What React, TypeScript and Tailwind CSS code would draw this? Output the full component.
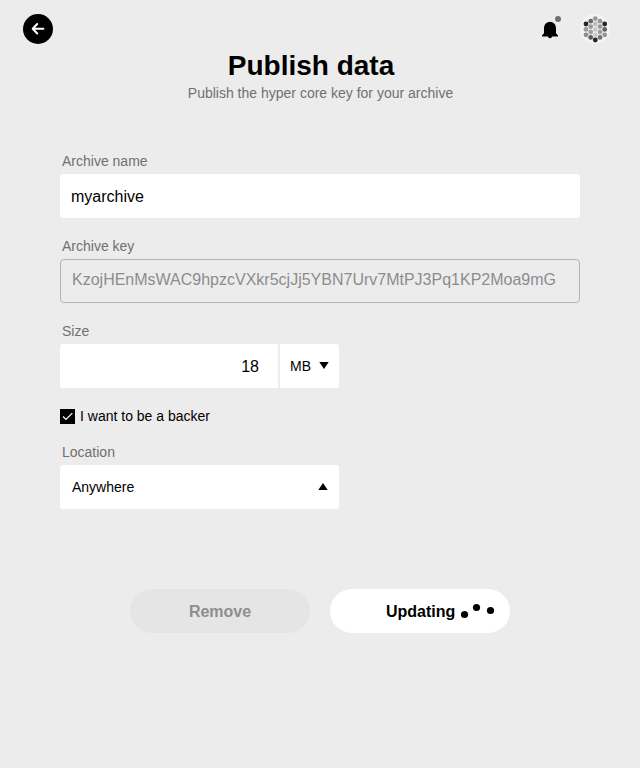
import React from 'react';

type Dot = [x: number, y: number, fill: string];

const avatarDots: Dot[] = [
  [6, 10, '#252525'], [6, 15.4, '#9a9a9a'], [6, 20.8, '#8c8c8c'],
  [10.7, 7.2, '#686868'], [10.7, 12.6, '#999999'], [10.7, 18, '#a0a0a0'], [10.7, 23.4, '#5c5c5c'],
  [15.3, 4.6, '#989898'], [15.3, 10, '#bdbdbd'], [15.3, 15.4, '#c9c9c9'], [15.3, 20.8, '#c9c9c9'], [15.3, 26, '#252525'],
  [20, 7.2, '#999999'], [20, 12.6, '#999999'], [20, 18, '#a0a0a0'], [20, 23.4, '#747474'],
  [24.7, 10, '#252525'], [24.7, 15.4, '#626262'], [24.7, 20.8, '#949494'],
];

function Avatar() {
  return (
    <svg className="size-[30px]" viewBox="0 0 30 30">
      <circle cx="15" cy="15" r="15" fill="#f4f4f4" />
      {avatarDots.map(([x, y, fill]) => (
        <circle key={`${x}-${y}`} cx={x} cy={y} r="2.4" fill={fill} />
      ))}
    </svg>
  );
}

function Bell() {
  return (
    <svg className="h-6 w-5 overflow-visible" viewBox="0 0 20 24">
      <path d="M2 19.6V18.6L4 16.2V10.8a6 6 0 0 1 12 0v5.4l2 2.4v1H12a2 1.6 0 0 1-4 0z" fill="#000" />
      <circle cx="18" cy="2" r="3" fill="#707070" />
    </svg>
  );
}

function Label({ children }: { children: React.ReactNode }) {
  return <div className="pl-0.5 text-sm leading-5 text-[#707070]">{children}</div>;
}

export default function App() {
  return (
    <div className="h-[768px] w-[640px] bg-[#ececec] font-['Liberation_Sans',Arial,sans-serif] text-black">
      <header className="flex h-11 items-end justify-between pr-[30px] pl-[23px]">
        <button className="size-[30px] rounded-full bg-black">
          <svg className="size-[30px]" viewBox="0 0 30 30" fill="none" stroke="#fff" strokeWidth="2">
            <path d="M20.4 14.8H10M14.2 10L9.7 14.8L14.2 19.5" strokeLinecap="round" strokeLinejoin="round" />
          </svg>
        </button>
        <div className="flex items-center gap-5">
          <Bell />
          <Avatar />
        </div>
      </header>
      <div className="pt-1.5 text-center">
        <h1 className="pr-[18px] text-[28px] leading-8 font-bold">Publish data</h1>
        <p className="pt-px pl-px text-sm leading-5 text-[#707070]">Publish the hyper core key for your archive</p>
      </div>
      <form className="flex flex-col px-[60px] pt-12">
        <Label>Archive name</Label>
        <div className="mt-[3px] flex h-11 items-center rounded-[3px] bg-white pt-0.5 pl-[11px] text-base">myarchive</div>
        <div className="mt-[18px]"><Label>Archive key</Label></div>
        <div className="mt-[3px] h-11 rounded-[4px] border border-[#b5b5b5] pt-2 pl-[11px] text-base leading-6 text-[#8c8c8c]">
          KzojHEnMsWAC9hpzcVXkr5cjJj5YBN7Urv7MtPJ3Pq1KP2Moa9mG
        </div>
        <div className="mt-[18px]"><Label>Size</Label></div>
        <div className="mt-[3px] flex h-11 w-[279px] gap-0.5">
          <div className="flex w-[218px] items-center justify-end rounded-l-[3px] bg-white pt-0.5 pr-[19px] text-base">18</div>
          <div className="flex flex-1 items-center rounded-r-[3px] bg-white pl-2.5 text-sm">
            MB
            <svg className="mb-px ml-2 h-[7px] w-2.5" viewBox="0 0 10 7"><path d="M0.3 0h9.4L5 7z" /></svg>
          </div>
        </div>
        <div className="mt-[18px] flex h-5 items-center gap-[5px] text-sm">
          <span className="mt-px size-[15px] bg-black">
            <svg className="size-[15px]" viewBox="0 0 15 15" fill="none" stroke="#fff" strokeWidth="1.2">
              <path d="M3 7.5L6 10.5L12.3 4.2" />
            </svg>
          </span>
          I want to be a backer
        </div>
        <div className="mt-4"><Label>Location</Label></div>
        <div className="mt-[3px] flex h-11 w-[279px] items-center justify-between rounded-[3px] bg-white pr-[11px] pl-3 text-sm">
          Anywhere
          <svg className="mb-0.5 h-[7px] w-2.5" viewBox="0 0 10 7"><path d="M0.3 7h9.4L5 0z" /></svg>
        </div>
        <div className="mt-20 flex justify-center gap-5 text-base font-bold">
          <div className="flex h-11 w-[180px] items-center justify-center rounded-full bg-[#e5e5e5] pt-0.5 text-[#8e8e8e]">Remove</div>
          <div className="flex h-11 w-[180px] items-center rounded-full bg-white pl-14">
            <span className="pt-0.5">Updating</span>
            <svg className="ml-1.5 h-5 w-9" viewBox="0 0 36 20">
              <circle cx="3.5" cy="13.5" r="3.6" />
              <circle cx="15.5" cy="6.5" r="3.6" />
              <circle cx="29.5" cy="9.5" r="3.6" />
            </svg>
          </div>
        </div>
      </form>
    </div>
  );
}
